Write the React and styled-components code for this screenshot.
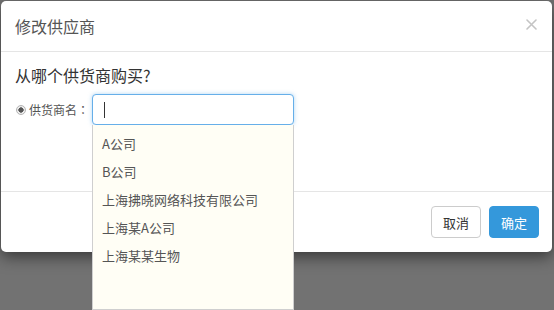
import React from "react";
import styled, { createGlobalStyle } from "styled-components";

const GlobalStyle = createGlobalStyle`
  html, body { margin: 0; padding: 0; }
  body {
    background: #727272;
    font-family: "Noto Sans CJK SC", "Noto Sans", sans-serif;
    overflow: hidden;
  }
`;

const Backdrop = styled.div`
  width: 554px;
  height: 310px;
  padding: 1px 2px 0 1px;
  box-sizing: border-box;
  background: #727272;
`;

const Modal = styled.div`
  background: #fff;
  border-radius: 5px;
  box-shadow: 0 5px 15px rgba(0, 0, 0, 0.5);
  position: relative;
`;

const Header = styled.div`
  height: 50px;
  border-bottom: 1px solid #e5e5e5;
  display: flex;
  align-items: center;
  justify-content: space-between;
  padding: 0 14px 0 14px;
`;

const Title = styled.h4`
  margin: 0;
  font-size: 16px;
  font-weight: normal;
  color: #555;
  line-height: 22px;
`;

const Close = styled.svg`
  width: 11px;
  height: 11px;
  margin-top: -3px;
  margin-right: 1px;
`;

const Body = styled.div`
  height: 139px;
  box-sizing: border-box;
  padding: 12px 14px 0 14px;
`;

const Question = styled.div`
  font-size: 16px;
  color: #333;
  line-height: 22px;
`;

const Row = styled.div`
  margin-top: 8px;
  display: flex;
  align-items: center;
`;

const Label = styled.label`
  width: 77px;
  display: flex;
  align-items: center;
  font-size: 12px;
  color: #555;
  line-height: 16px;
`;

const Colon = styled.span`
  font-family: "Noto Sans CJK TC", sans-serif;
`;

const Radio = styled.span`
  width: 10px;
  height: 10px;
  border-radius: 50%;
  border: 1px solid #b5b5b5;
  background: radial-gradient(circle, #555 0 2.4px, #ececec 2.9px);
  box-sizing: border-box;
  margin: 0 3px 0 1px;
`;

const Field = styled.div`
  position: relative;
  width: 202px;
`;

const Input = styled.div`
  height: 31px;
  box-sizing: border-box;
  border: 1px solid #66afe9;
  border-radius: 4px;
  box-shadow: 0 0 4px rgba(102, 175, 233, 0.5);
  background: #fff;
  display: flex;
  align-items: center;
  padding-left: 11px;
`;

const Caret = styled.span`
  width: 1px;
  height: 16px;
  background: #333;
`;

const Menu = styled.ul`
  position: absolute;
  top: 31px;
  left: 0;
  width: 202px;
  height: 185px;
  box-sizing: border-box;
  margin: 0;
  padding: 5px 0 0 0;
  list-style: none;
  background: #fffef5;
  border: 1px solid #cfcfcf;
  border-top: 0;
  z-index: 5;
`;

const Item = styled.li`
  height: 28px;
  line-height: 28px;
  padding-left: 9px;
  font-size: 13px;
  color: #555;
  white-space: nowrap;
`;

const Footer = styled.div`
  border-top: 1px solid #e5e5e5;
  display: flex;
  justify-content: flex-end;
  gap: 8px;
  padding: 14px 13px 14px 0;
`;

const Button = styled.button`
  width: 50px;
  height: 32px;
  box-sizing: border-box;
  border-radius: 4px;
  font-family: inherit;
  font-size: 13px;
  padding: 0;
  border: 1px solid ${(p) => (p.$primary ? "#3498db" : "#ccc")};
  background: ${(p) => (p.$primary ? "#3498db" : "#fff")};
  color: ${(p) => (p.$primary ? "#fff" : "#333")};
`;

const items = ["A公司", "B公司", "上海拂晓网络科技有限公司", "上海某A公司", "上海某某生物"];

export default function App() {
  return (
    <>
      <GlobalStyle />
      <Backdrop>
        <Modal>
          <Header>
            <Title>修改供应商</Title>
            <Close viewBox="0 0 11 11">
              <path d="M1 1 L10 10 M10 1 L1 10" stroke="#c4c4c4" strokeWidth="1.6" strokeLinecap="round" />
            </Close>
          </Header>
          <Body>
            <Question>从哪个供货商购买?</Question>
            <Row>
              <Label>
                <Radio />
                供货商名<Colon>：</Colon>
              </Label>
              <Field>
                <Input>
                  <Caret />
                </Input>
                <Menu>
                  {items.map((t) => (
                    <Item key={t}>{t}</Item>
                  ))}
                </Menu>
              </Field>
            </Row>
          </Body>
          <Footer>
            <Button>取消</Button>
            <Button $primary>确定</Button>
          </Footer>
        </Modal>
      </Backdrop>
    </>
  );
}
